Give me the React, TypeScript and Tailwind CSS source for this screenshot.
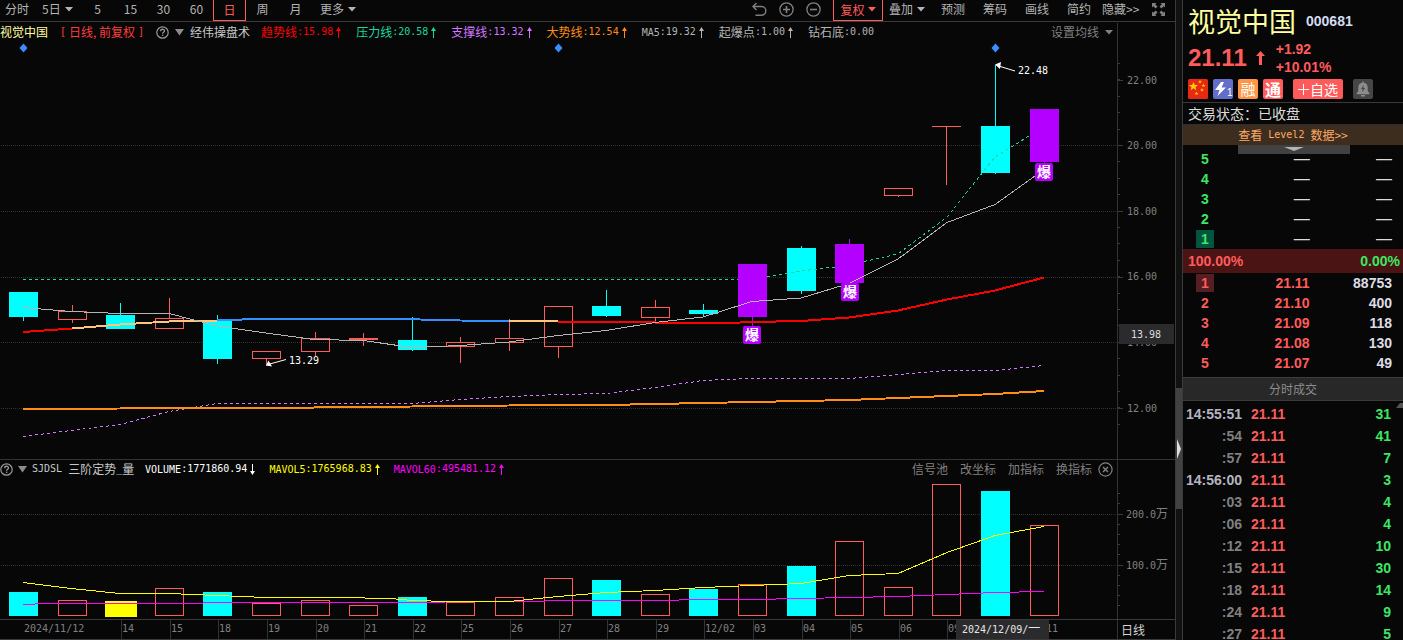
import type { ReactNode } from "react";

type Candle = {
  kind: "down" | "up" | "burst";
  top: number;
  bottom: number;
  high: number;
  low: number;
  volTop: number;
  label: string;
};

const candles: Candle[] = [
  { kind: "down", top: 292, bottom: 317, high: 292, low: 321, volTop: 592, label: "2024/11/12" },
  { kind: "up", top: 311, bottom: 320, high: 305, low: 323, volTop: 600, label: "" },
  { kind: "down", top: 315, bottom: 329, high: 303, low: 329, volTop: 601, label: "14" },
  { kind: "up", top: 318, bottom: 329, high: 298, low: 329, volTop: 588, label: "15" },
  { kind: "down", top: 321, bottom: 359, high: 315, low: 364, volTop: 592, label: "18" },
  { kind: "up", top: 351, bottom: 359, high: 351, low: 366, volTop: 603, label: "19" },
  { kind: "up", top: 338, bottom: 352, high: 332, low: 356, volTop: 600, label: "20" },
  { kind: "up", top: 338, bottom: 340, high: 333, low: 346, volTop: 605, label: "21" },
  { kind: "down", top: 340, bottom: 350, high: 317, low: 351, volTop: 597, label: "22" },
  { kind: "up", top: 342, bottom: 347, high: 337, low: 363, volTop: 602, label: "25" },
  { kind: "up", top: 338, bottom: 343, high: 319, low: 351, volTop: 597, label: "26" },
  { kind: "up", top: 306, bottom: 347, high: 306, low: 358, volTop: 578, label: "27" },
  { kind: "down", top: 306, bottom: 316, high: 290, low: 317, volTop: 580, label: "28" },
  { kind: "up", top: 307, bottom: 318, high: 300, low: 322, volTop: 594, label: "29" },
  { kind: "down", top: 310, bottom: 314, high: 304, low: 316, volTop: 589, label: "12/02" },
  { kind: "burst", top: 264, bottom: 317, high: 264, low: 326, volTop: 584, label: "03" },
  { kind: "down", top: 248, bottom: 291, high: 246, low: 294, volTop: 566, label: "04" },
  { kind: "burst", top: 244, bottom: 283, high: 239, low: 284, volTop: 541, label: "05" },
  { kind: "up", top: 188, bottom: 196, high: 188, low: 197, volTop: 587, label: "06" },
  { kind: "up", top: 126, bottom: 127, high: 126, low: 185, volTop: 484, label: "09" },
  { kind: "down", top: 126, bottom: 173, high: 65, low: 174, volTop: 491, label: "" },
  { kind: "burst", top: 109, bottom: 162, high: 109, low: 163, volTop: 525, label: "11" },
];

const bursts = [
  { x: 743, y: 326 },
  { x: 841, y: 283 },
  { x: 1035, y: 163 },
];

const leftOf = (i: number) => Math.round(9 + i * 48.6);

function Num({ children }: { children: ReactNode }) {
  return <span className="font-['DejaVu_Sans_Mono',monospace] text-[10px]">{children}</span>;
}

function Caret({ className = "" }: { className?: string }) {
  return (
    <svg className={`h-[5px] w-2 shrink-0 ${className}`} viewBox="0 0 8 5" fill="currentColor" aria-hidden="true">
      <path d="M0 0h8L4 4.5z" />
    </svg>
  );
}

function HelpButton() {
  return (
    <button type="button" aria-label="帮助" className="shrink-0 text-[#999]">
      <svg className="size-[13px]" viewBox="0 0 13 13" fill="none" stroke="currentColor" aria-hidden="true">
        <circle cx="6.5" cy="6.5" r="5.7" strokeWidth="1.2" />
        <path d="M4.6 5.2c0-2.6 3.9-2.5 3.9-.2 0 1.2-1.9 1.3-1.9 2.7" strokeWidth="1.3" />
        <path d="M6.6 8.6v1.3" strokeWidth="1.4" />
      </svg>
    </button>
  );
}

function Collapse() {
  return (
    <button type="button" aria-label="选择指标" className="shrink-0 text-[#8c8c8c]">
      <svg className="h-[7px] w-[9px]" viewBox="0 0 9 7" fill="currentColor" aria-hidden="true">
        <path d="M0 0h9L4.5 6.5z" />
      </svg>
    </button>
  );
}

function Trend({ down = false }: { down?: boolean }) {
  return (
    <svg
      className={down ? "ml-px h-[11px] w-[9px] rotate-180" : "ml-px h-[11px] w-[9px]"}
      viewBox="0 0 9 11"
      fill="none"
      stroke="currentColor"
      role="img"
      aria-label={down ? "下降" : "上升"}
    >
      <path d="M4.5 11V1.5" />
      <path d="M4.5 0 2 4h5z" fill="currentColor" stroke="none" />
    </svg>
  );
}

function Legend({ name, value, color, arrow }: { name: ReactNode; value: string; color: string; arrow?: "up" | "down" }) {
  return (
    <span className={`flex items-center ${color}`}>
      <span>{name}</span>
      <Num>:{value}</Num>
      {arrow && <Trend down={arrow === "down"} />}
    </span>
  );
}

const periods = ["5", "15", "30", "60", "日", "周", "月"];
const tools = ["预测", "筹码", "画线", "简约"];

function Toolbar() {
  return (
    <nav className="flex h-[22px] shrink-0 items-center border-b border-[#3a3a3a] pb-[3px] text-[#b4b4b4]">
      <button type="button" className="ml-[5px]">分时</button>
      <button type="button" className="ml-[13px] flex w-[39px] items-center gap-1">
        5日
        <Caret />
      </button>
      {periods.map((p) => (
        <button
          key={p}
          type="button"
          className={
            p === "日"
              ? "mt-[2px] h-[21px] w-[33px] shrink-0 border border-t-0 border-[#ff5b5b] text-[#ff5b5b]"
              : "w-[33px] shrink-0"
          }
        >
          {p}
        </button>
      ))}
      <button type="button" className="ml-2 flex items-center gap-1">
        更多
        <Caret />
      </button>
      <div className="ml-auto flex h-full shrink-0 items-center">
        <div className="mr-3 flex gap-3 text-[#808080]">
          <button type="button" aria-label="撤销">
            <svg className="size-[15px]" viewBox="0 0 15 15" fill="none" stroke="currentColor" strokeWidth="1.4">
              <path d="M4.5 1 1 4.5 4.5 8M1 4.5h8.5a4.2 4.2 0 0 1 0 8.7H3.5" />
            </svg>
          </button>
          <button type="button" aria-label="放大">
            <svg className="size-[15px]" viewBox="0 0 15 15" fill="none" stroke="currentColor" strokeWidth="1.3">
              <circle cx="7.5" cy="7.5" r="6.6" />
              <path d="M4 7.5h7M7.5 4v7" strokeWidth="1.6" />
            </svg>
          </button>
          <button type="button" aria-label="缩小">
            <svg className="size-[15px]" viewBox="0 0 15 15" fill="none" stroke="currentColor" strokeWidth="1.3">
              <circle cx="7.5" cy="7.5" r="6.6" />
              <path d="M4 7.5h7" strokeWidth="1.6" />
            </svg>
          </button>
        </div>
        <button
          type="button"
          className="mt-[2px] flex h-[21px] w-[50px] items-center justify-center gap-[3px] border border-t-0 border-[#ff5b5b] text-[#ff5b5b]"
        >
          复权
          <Caret />
        </button>
        <button type="button" className="ml-[6px] flex w-[43px] items-center gap-1">
          叠加
          <Caret />
        </button>
        {tools.map((t) => (
          <button key={t} type="button" className="w-[42px]">
            {t}
          </button>
        ))}
        <button type="button" className="ml-[2px] flex w-[50px] items-center">
          隐藏&gt;&gt;
        </button>
        <button type="button" aria-label="全屏" className="mr-[10px] text-[#808080]">
          <svg className="size-[13px]" viewBox="0 0 13 13" fill="currentColor">
            <path d="M0 0h4.500L3.200 1.300 5.500 3.600 3.600 5.500 1.300 3.200 0 4.500zM13 0v4.500L11.700 3.200 9.400 5.500 7.500 3.600 9.800 1.300 8.500 0zM0 13V8.500l1.300 1.300L3.600 7.500l1.900 1.900-2.300 2.300L4.500 13zM13 13H8.500l1.300-1.300-2.300-2.300 1.900-1.900 2.300 2.300L13 8.500z" />
          </svg>
        </button>
      </div>
    </nav>
  );
}

function PricePlot() {
  return (
    <svg className="min-h-0 w-full flex-1" viewBox="0 42 1117 417" preserveAspectRatio="xMaxYMid meet" role="img" aria-label="日线K线图">
      <g stroke="#303030" strokeDasharray="1 1">
        {[145, 211, 277, 342, 408].map((y) => (
          <path key={y} d={`M1 ${y + 0.5}H1117`} />
        ))}
      </g>
      <g fill="#3c8cff">
        {[23.5, 558.5, 995.5].map((x) => (
          <path key={x} d={`M${x} 43.500l4 4.500-4 4.500-4-4.500z`} />
        ))}
      </g>
      <g shapeRendering="crispEdges">
        <path d="M23 279.500H738M752 279.500 767 277" stroke="#18d8a0" strokeDasharray="3 3" fill="none" />
        {candles.map((c, i) => {
          const x = leftOf(i);
          const color = c.kind === "down" ? "#00ffff" : c.kind === "burst" ? "#b400ff" : "#ff5b5b";
          return (
            <g key={i} fill={color}>
              <rect x={x + 14} y={c.high} width={1} height={c.top - c.high} />
              <rect x={x + 14} y={c.bottom} width={1} height={c.low - c.bottom} />
              {c.kind === "up" && c.bottom - c.top > 2 ? (
                <rect x={x + 0.5} y={c.top + 0.5} width={28} height={c.bottom - c.top - 1} fill="none" stroke={color} />
              ) : (
                <rect x={x} y={c.top} width={29} height={c.bottom - c.top} />
              )}
            </g>
          );
        })}
      </g>
      <g fill="none" shapeRendering="crispEdges">
        <path
          d="M767 277 801 271l34-4M864 261.500 898 254l49-37 48-60 34-21"
          stroke="#18d8a0"
          strokeDasharray="3 3"
        />
        <path
          d="M23 436.500 71 430.500 120 424.500 169 411.500 217 403.500H412L460 399.500 509 396.500 558 394.500 606 393.500 655 387.500 703 380.500 752 378.500H849L898 374.500 946 370.500H995L1044 365.500"
          stroke="#d278ff"
          strokeDasharray="3 3"
        />
        <g strokeWidth="2">
          <path
            d="M23 409 120 408.500 121 408 314 407.500 412 406.500 509 405.500 606 405 655 404 752 402 849 400 898 398 946 396 995 394 1044 391"
            stroke="#ff8c14"
          />
          <path d="M23 332 72 328.500" stroke="#ff0000" />
          <path d="M72 328.500 120 324.500 169 321.500 217 321M509 321H558" stroke="#ffc57d" />
          <path d="M217 320 267 319H400L460 320.500 509 321" stroke="#3291ff" />
          <path
            d="M558 322H655L656 323H728L752 322 801 321 849 317.500 898 310.500 947 299.500 995 290.500 1044 277.500"
            stroke="#ff0000"
          />
        </g>
        <path
          d="M23 307.500 71 311.500 120 313.500H169L217 326 266 333 314 339.500 363 340.500 412 347.500 460 345.500 509 342 558 335.500 606 330.500 655 322.500 703 317 752 301.500 801 298 849 283.500 898 259 947 222.500 995 204.500 1044 169.500"
          stroke="#b4b4b4"
        />
      </g>
      <g stroke="#fff" fill="#fff">
        <path d="M997 65.500 1015 71M268 364.500 286 359.500" fill="none" />
        <path d="M995 64.500 1001 62 1000 69zM266 365.500 268.500 360.500 272 366.500z" stroke="none" />
      </g>
      <g fill="#fff" className="font-['DejaVu_Sans_Mono',monospace] text-[10px]">
        <text x="1018" y="74">22.48</text>
        <text x="289" y="364">13.29</text>
      </g>
      {bursts.map((b) => (
        <g key={b.x}>
          <rect x={b.x} y={b.y} width="18" height="18" rx="2" fill="#b400ff" />
          <text x={b.x + 9} y={b.y + 14} textAnchor="middle" fill="#fff" className="text-[14px] font-bold">
            爆
          </text>
        </g>
      ))}
    </svg>
  );
}

const minorPrice = Array.from({ length: 24 }, (_, i) => 63 + Math.round(i * 16.4)).filter((y) => y < 440);

function PriceAxis() {
  return (
    <svg
      className="h-full w-[58px] shrink-0"
      viewBox="1117 22 58 437"
      preserveAspectRatio="xMinYMid meet"
      role="img"
      aria-label="价格坐标"
    >
      <path d="M1117.500 23V459" stroke="#333" />
      <g stroke="#3a3a3a">
        {minorPrice.map((y) => (
          <path key={y} d={`M1118 ${y + 0.5}h2`} />
        ))}
        {[80, 145, 211, 277, 342, 408].map((y) => (
          <path key={y} d={`M1118 ${y + 0.5}h5`} />
        ))}
      </g>
      <g fill="#808080" className="font-['DejaVu_Sans_Mono',monospace] text-[10px]">
        {["22.00", "20.00", "18.00", "16.00", "14.00", "12.00"].map((t, i) => (
          <text key={t} x="1127" y={84 + Math.floor(i * 65.6)}>
            {t}
          </text>
        ))}
        <rect x="1119" y="324" width="55" height="20" fill="#2b2b2d" />
        <text x="1131" y="338" fill="#dcdcdc">
          13.98
        </text>
      </g>
    </svg>
  );
}

function VolumePlot() {
  return (
    <svg className="min-h-0 w-full flex-1" viewBox="0 478 1117 141" preserveAspectRatio="xMaxYMid meet" role="img" aria-label="成交量">
      <g stroke="#303030" strokeDasharray="1 1">
        <path d="M1 514.500H1117M1 565.500H1117" />
      </g>
      <g shapeRendering="crispEdges">
        {candles.map((c, i) => {
          const x = leftOf(i);
          if (i === 2) return <rect key={i} x={105} y={c.volTop} width={32} height={16} fill="#ffff00" />;
          return c.kind === "down" ? (
            <rect key={i} x={x} y={c.volTop} width={29} height={616 - c.volTop} fill="#00ffff" />
          ) : (
            <rect key={i} x={x + 0.5} y={c.volTop + 0.5} width={28} height={615 - c.volTop} fill="none" stroke="#ff5b5b" />
          );
        })}
      </g>
      <g fill="none" shapeRendering="crispEdges">
        <path
          d="M23 604.500 48 603.500H190L217 602.500H430L460 601.500H530L560 600.500H655L703 599.500H752L801 598.500 849 597.500 898 596.500 947 594.500 995 592.500 1044 591.500"
          stroke="#ff00ff"
        />
        <path
          d="M23 582.500 71 588.500 120 593.500H169L217 595.500 266 597.500H340L390 598.500 412 600.500 450 601.500H509L558 596.500 606 592.500 655 590.500 703 587.500 752 585.500 801 583.500 849 575.500 898 573.500 947 552.500 995 535.500 1044 526.500"
          stroke="#ffff00"
        />
      </g>
    </svg>
  );
}

function VolumeAxis() {
  return (
    <svg
      className="h-full w-[58px] shrink-0"
      viewBox="1117 460 58 159"
      preserveAspectRatio="xMinYMid meet"
      role="img"
      aria-label="成交量坐标"
    >
      <path d="M1117.500 460V619" stroke="#333" />
      <g stroke="#3a3a3a">
        {[493, 503, 524, 534, 544, 554, 575, 585, 595, 605].map((y) => (
          <path key={y} d={`M1118 ${y + 0.5}h2`} />
        ))}
        <path d="M1118 514.500h5M1118 565.500h5" />
      </g>
      <g fill="#808080" className="font-['DejaVu_Sans_Mono',monospace] text-[10px]">
        <text x="1126" y="518">
          200.0<tspan className="font-['Noto_Sans_CJK_SC',sans-serif] text-[12px]">万</tspan>
        </text>
        <text x="1126" y="569">
          100.0<tspan className="font-['Noto_Sans_CJK_SC',sans-serif] text-[12px]">万</tspan>
        </text>
      </g>
    </svg>
  );
}

function TimeAxis() {
  return (
    <div className="flex h-[21px] shrink-0 border-y border-[#3a3a3a]">
      <svg className="h-full min-w-0 flex-1" viewBox="0 620 1117 19" preserveAspectRatio="xMaxYMid meet" role="img" aria-label="日期坐标">
        <g fill="#808080" className="font-['DejaVu_Sans_Mono',monospace] text-[10px]">
          {candles.map((c, i) =>
            c.label ? (
              <g key={i}>
                {i > 0 && <path d={`M${leftOf(i) + 15.5} 620v19`} stroke="#333" />}
                <text x={i === 0 ? 24 : leftOf(i) + 16} y="632">
                  {c.label}
                </text>
              </g>
            ) : null,
          )}
          <rect x="956" y="620" width="93" height="19" fill="#2b2b2d" />
          <text x="962" y="633" fill="#e6e6e6">
            2024/12/09/<tspan className="font-['Noto_Sans_CJK_SC',sans-serif] text-[12px]">一</tspan>
          </text>
        </g>
      </svg>
      <button type="button" className="flex w-[58px] shrink-0 items-center border-l border-[#333] pl-[3px] text-[#d2d2d2]">
        日线
      </button>
    </div>
  );
}

function ChartArea() {
  return (
    <main className="flex min-w-0 flex-1 flex-col">
      <Toolbar />
      <section className="flex min-h-0 flex-1 border-b border-[#333]">
        <div className="flex min-w-0 flex-1 flex-col">
          <div className="flex h-5 shrink-0 items-center whitespace-nowrap">
            <span className="text-[#ffffa0]">视觉中国</span>
            <span className="ml-3 flex w-[84px] items-center justify-between text-[#ff3c3c]">
              <Num>[</Num>
              <span>日线,</span>
              <span>前复权</span>
              <Num>]</Num>
            </span>
            <span className="ml-3 flex items-center gap-[6px]">
              <HelpButton />
              <Collapse />
              <span className="text-[#c8c8c8]">经伟操盘术</span>
            </span>
            <div className="ml-[11px] flex gap-[13px]">
              <Legend name="趋势线" value="15.98" color="text-[#ff0000]" arrow="up" />
              <Legend name="压力线" value="20.58" color="text-[#18d8a0]" arrow="up" />
              <Legend name="支撑线" value="13.32" color="text-[#d278ff]" arrow="up" />
              <Legend name="大势线" value="12.54" color="text-[#ff8c14]" arrow="up" />
              <Legend name={<Num>MA5</Num>} value="19.32" color="text-[#b4b4b4]" arrow="up" />
              <Legend name="起爆点" value="1.00" color="text-[#b4b4b4]" arrow="up" />
              <Legend name="钻石底" value="0.00" color="text-[#b4b4b4]" />
            </div>
            <button type="button" className="mr-1 ml-auto flex items-center gap-[6px] text-[#808080]">
              设置均线
              <Caret />
            </button>
          </div>
          <PricePlot />
        </div>
        <PriceAxis />
      </section>
      <section className="flex h-[159px] shrink-0">
        <div className="flex min-w-0 flex-1 flex-col">
          <div className="flex h-[18px] shrink-0 items-center whitespace-nowrap">
            <span className="flex items-center gap-[5px]">
              <HelpButton />
              <Collapse />
              <span className="flex w-[102px] items-center text-[#c8c8c8]">
                <Num>SJDSL&nbsp;</Num>三阶定势<Num>_</Num>量
              </span>
            </span>
            <div className="ml-[11px] flex gap-3">
              <Legend name={<Num>VOLUME</Num>} value="1771860.94" color="text-white" arrow="down" />
              <Legend name={<Num>MAVOL5</Num>} value="1765968.83" color="text-[#ffff00]" arrow="up" />
              <Legend name={<Num>MAVOL60</Num>} value="495481.12" color="text-[#ff00ff]" arrow="up" />
            </div>
            <div className="mr-1 ml-auto flex items-center gap-3 text-[#808080]">
              <button type="button">信号池</button>
              <button type="button">改坐标</button>
              <button type="button">加指标</button>
              <span className="flex items-center gap-[6px]">
                <button type="button">换指标</button>
                <button type="button" aria-label="关闭">
                  <svg className="size-[15px]" viewBox="0 0 15 15" fill="none" stroke="currentColor" strokeWidth="1.2">
                    <circle cx="7.500" cy="7.500" r="6.600" />
                    <path d="m5 5 5 5M10 5l-5 5" strokeWidth="1.500" />
                  </svg>
                </button>
              </span>
            </div>
          </div>
          <VolumePlot />
        </div>
        <VolumeAxis />
      </section>
      <TimeAxis />
    </main>
  );
}

const star = "M0-1 .29-.31 1-.31 .44.12 .62.81 0 .4-.62.81-.44.12-1-.31-.29-.31z";

function StockHeader() {
  return (
    <header className="border-b border-[#3a3a3a] pl-[5px]">
      <div className="flex h-[42px] items-center gap-[10px]">
        <h1 className="text-[27px] leading-[42px] text-[#ffffa0]">视觉中国</h1>
        <span className="font-['Liberation_Sans',sans-serif] text-sm font-bold text-[#d2dcf0]">000681</span>
      </div>
      <div className="flex h-8 items-center font-['Liberation_Sans',sans-serif] font-bold text-[#ff5b5b]">
        <span className="text-2xl leading-8">21.11</span>
        <svg className="ml-[9px] h-[14px] w-[9px]" viewBox="0 0 9 14" fill="currentColor" role="img" aria-label="上涨">
          <path d="M4.500 0 9 5H6v9H3V5H0z" />
        </svg>
        <span className="ml-[11px] flex flex-col text-sm leading-[18px] font-semibold">
          <span>+1.92</span>
          <span>+10.01%</span>
        </span>
      </div>
      <div className="flex h-7 items-center gap-[5px] pt-[2px] text-base leading-5 text-white">
        <svg className="size-5" viewBox="0 0 20 20" role="img" aria-label="中国">
          <rect width="20" height="20" rx="1.500" fill="#e62814" />
          <g fill="#ffd200">
            <path d={star} transform="translate(5.500 7.500) scale(4.500)" />
            <path d={star} transform="translate(12 2.800) scale(2)" />
            <path d={star} transform="translate(15.500 6.500) scale(2)" />
            <path d={star} transform="translate(14 11) scale(2)" />
            <path d={star} transform="translate(8.500 14.500) scale(2)" />
          </g>
        </svg>
        <span className="flex size-5 items-end rounded-xs bg-[#646ec8]">
          <svg className="h-5 w-[14px]" viewBox="0 0 14 20" fill="currentColor" aria-hidden="true">
            <path d="M8 3 2 11h4.500L4.500 17 13 8.500H8.500L11 3z" />
          </svg>
          <span className="font-['Liberation_Sans',sans-serif] text-[10px] leading-3">1</span>
        </span>
        <span className="size-5 rounded-xs bg-[#ff9646] text-center text-[15px]">融</span>
        <span className="size-5 rounded-xs bg-[#ff5b5b] text-center font-bold">通</span>
        <button type="button" className="ml-[5px] flex h-5 w-[50px] items-center justify-center gap-px rounded-xs bg-[#ff5b5b] text-sm">
          <svg className="size-[11px]" viewBox="0 0 11 11" stroke="currentColor" aria-hidden="true">
            <path d="M0 5.500h11M5.500 0v11" />
          </svg>
          自选
        </button>
        <button type="button" aria-label="预警" className="ml-[5px] flex size-5 items-center justify-center rounded-xs bg-[#464646] text-[#8c8c8c]">
          <svg className="size-4" viewBox="0 0 16 16" fill="currentColor" aria-hidden="true">
            <path d="M7.300.5h1.400v1.300c2.600.4 4 2.300 4 4.700v3.500l1.800 2.500v.8h-13v-.8L3.300 10V6.500c0-2.400 1.400-4.300 4-4.700zM6 14h4v1.500H6z" />
            <path d="M9 4 5.800 8h1.900L7 11.200 10.200 7H8.300z" fill="#464646" />
          </svg>
        </button>
      </div>
    </header>
  );
}

const asks = [5, 4, 3, 2, 1];
const bids = [
  [1, "21.11", "88753"],
  [2, "21.10", "400"],
  [3, "21.09", "118"],
  [4, "21.08", "130"],
  [5, "21.07", "49"],
] as const;

const trades = [
  ["14:55:51", "31"],
  [":54", "41"],
  [":57", "7"],
  ["14:56:00", "3"],
  [":03", "4"],
  [":06", "4"],
  [":12", "10"],
  [":15", "30"],
  [":18", "14"],
  [":24", "9"],
  [":27", "5"],
];

function Level({ n, className }: { n: number; className: string }) {
  return <span className={`ml-[13px] block size-[18px] text-center leading-[18px] ${className}`}>{n}</span>;
}

function QuotePanel() {
  return (
    <aside className="flex w-[221px] shrink-0 flex-col border-l border-[#3a3a3a]">
      <StockHeader />
      <p className="h-[22px] shrink-0 border-b border-[#2d2d2d] pl-[5px] text-sm leading-[21px] text-[#dcdcdc]">交易状态：已收盘</p>
      <div className="relative">
        <a href="#level2" className="flex h-5 items-center justify-center gap-[6px] bg-[#3c2d1e] text-[#ffaa64]">
          <span>查看</span>
          <Num>Level2</Num>
          <span>数据&gt;&gt;</span>
        </a>
        <button type="button" aria-label="展开" className="absolute top-5 left-[55px] flex h-[9px] w-28 justify-center bg-[#414141] pt-[2px] text-[#b4b4b4]">
          <svg className="h-1 w-5" viewBox="0 0 20 4" fill="currentColor" aria-hidden="true">
            <path d="M0 0h20L10 4z" />
          </svg>
        </button>
      </div>
      <div className="mt-1 shrink-0 font-['Liberation_Sans',sans-serif] text-sm font-bold">
        <table className="w-full table-fixed border-collapse" aria-label="卖盘">
          <tbody>
            {asks.map((n) => (
              <tr key={n} className="h-5 leading-5">
                <td className="p-0 text-[#3ce664]">
                  <Level n={n} className={n === 1 ? "bg-[#005541]" : ""} />
                </td>
                <td className="p-0 pr-[20px] text-right text-base leading-5 font-normal text-[#dcdcdc]">—</td>
                <td className="p-0 pr-[11px] text-right text-base leading-5 font-normal text-[#dcdcdc]">—</td>
              </tr>
            ))}
          </tbody>
        </table>
        <div className="flex h-6 items-center justify-between bg-[#4b1414] pr-[3px] pl-[5px]">
          <span className="text-[#ff5b5b]">100.00%</span>
          <span className="text-[#3ce664]">0.00%</span>
        </div>
        <table className="w-full table-fixed border-collapse" aria-label="买盘">
          <tbody>
            {bids.map(([n, price, vol]) => (
              <tr key={n} className="h-5 leading-5">
                <td className="p-0 text-[#ff5b5b]">
                  <Level n={n} className={n === 1 ? "bg-[#551e23]" : ""} />
                </td>
                <td className="p-0 pr-[20px] text-right text-[#ff5b5b]">{price}</td>
                <td className="p-0 pr-[11px] text-right text-[#dcdce6]">{vol}</td>
              </tr>
            ))}
          </tbody>
        </table>
      </div>
      <h2 className="mt-1 h-6 shrink-0 border-y border-[#3c3c3c] bg-[#282828] text-center text-[#8c8c8c] leading-[22px]">分时成交</h2>
      <div className="relative flex min-h-0 flex-1 items-start overflow-hidden pt-[2px]">
        <svg className="absolute top-[2px] right-0 h-[5px] w-[7px] text-[#555]" viewBox="0 0 7 5" fill="currentColor" aria-hidden="true">
          <path d="M4 0h3v5H0z" />
        </svg>
        <table className="w-full table-fixed border-collapse font-['Liberation_Sans',sans-serif] text-sm font-bold" aria-label="分时成交">
          <tbody>
            {trades.map(([time, vol]) => (
              <tr key={time} className="h-[22px]">
                <td className={`w-[59px] p-0 text-right ${time.length > 3 ? "text-[#b4b4c3]" : "text-[#808080]"}`}>{time}</td>
                <td className="p-0 pl-[9px] text-[#ff5b5b]">21.11</td>
                <td className="p-0 pr-3 text-right text-[#3ce664]">{vol}</td>
              </tr>
            ))}
          </tbody>
        </table>
      </div>
    </aside>
  );
}

export default function App() {
  return (
    <div className="flex h-screen overflow-hidden bg-[#070707] font-['Noto_Sans_CJK_SC',sans-serif] text-xs leading-4">
      <ChartArea />
      <div className="flex w-[7px] shrink-0 flex-col border-l border-[#3a3a3a] bg-[#111]">
        <div className="grow-[388]" />
        <button type="button" aria-label="收起侧栏" className="flex h-[121px] items-center bg-[#414141] text-[#dcdcdc]">
          <svg className="h-5 w-[5px]" viewBox="0 0 5 20" fill="currentColor" aria-hidden="true">
            <path d="M1 0 5 10 1 20z" />
          </svg>
        </button>
        <div className="grow-[131]" />
      </div>
      <QuotePanel />
    </div>
  );
}
